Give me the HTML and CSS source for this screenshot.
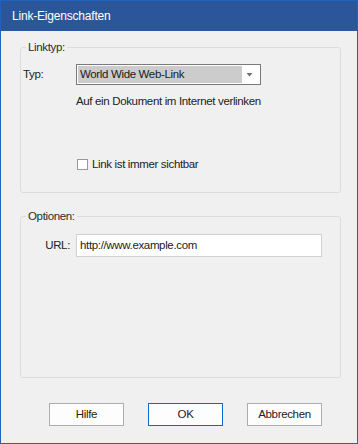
FILE: index.html
```html
<!DOCTYPE html>
<html lang="de">
<head>
<meta charset="utf-8">
<title>Link-Eigenschaften</title>
<link rel="stylesheet" href="styles.css">
</head>
<body>
<div class="window">
  <div class="titlebar">Link-Eigenschaften</div>
  <div class="content">
    <div class="group group-type">
      <span class="legend">Linktyp:</span>
      <div class="row row-type">
        <span class="label">Typ:</span>
        <div class="select">
          <span class="select-value">World Wide Web-Link</span>
          <svg class="select-arrow" width="7" height="4" viewBox="0 0 7 4"><path d="M0.5 0H6.5L3.5 3.5Z" fill="#707070"/></svg>
        </div>
      </div>
      <div class="desc">Auf ein Dokument im Internet verlinken</div>
      <label class="check">
        <span class="box"></span>
        <span>Link ist immer sichtbar</span>
      </label>
    </div>
    <div class="group group-options">
      <span class="legend">Optionen:</span>
      <div class="row row-url">
        <span class="label label-url">URL:</span>
        <div class="input">http://www.example.com</div>
      </div>
    </div>
    <div class="buttons">
      <button class="btn">Hilfe</button>
      <button class="btn btn-default">OK</button>
      <button class="btn">Abbrechen</button>
    </div>
  </div>
</div>
</body>
</html>
```
FILE: styles.css
```css
* { box-sizing: border-box; }
html, body { margin: 0; padding: 0; background: #f0f0f0; }
body {
  font-family: "Liberation Sans", Arial, sans-serif;
  font-size: 11.5px;
  letter-spacing: -0.35px;
  color: #222;
  line-height: 15px;
}
.window {
  width: 358px;
  height: 444px;
  border: 1px solid #1f63c2;
  background: #f0f0f0;
  display: flex;
  flex-direction: column;
}
.titlebar {
  height: 30px;
  flex: none;
  background: #2b579a;
  color: #fff;
  font-size: 12px;
  letter-spacing: -0.2px;
  padding-left: 11px;
  display: flex;
  align-items: center;
  padding-top: 1px;
}
.content {
  flex: 1;
  padding: 16px 16px 0 19px;
  display: flex;
  flex-direction: column;
}
.group {
  position: relative;
  border: 1px solid #dcdcdc;
  border-radius: 3px;
  width: 321px;
}
.legend {
  position: absolute;
  top: -8px;
  left: 5px;
  padding: 0 2px;
  background: #f0f0f0;
  color: #2b2b2b;
}
.group-type {
  height: 146px;
  padding: 16px 0 0 0;
}
.group-options {
  height: 162px;
  margin-top: 23px;
  padding: 17px 0 0 0;
}
.row {
  display: flex;
  align-items: center;
}
.label {
  width: 55px;
  padding-left: 2px;
}
.label-url {
  text-align: right;
  padding-right: 6px;
}
.select {
  width: 185px;
  height: 21px;
  border: 1px solid #7a7a7a;
  background: #fff;
  padding: 1px;
  display: flex;
  align-items: center;
}
.select-value {
  width: 164px;
  height: 17px;
  background: #cccccc;
  padding-left: 2px;
  line-height: 17px;
  color: #1a1a1a;
}
.select-arrow {
  margin-left: 4px;
}
.desc {
  margin: 9px 0 0 55px;
}
.check {
  display: flex;
  align-items: center;
  margin: 48px 0 0 56px;
  gap: 4px;
}
.box {
  width: 11px;
  height: 11px;
  border: 1px solid #9a9a9a;
  background: #fff;
}
.input {
  width: 246px;
  height: 23px;
  border: 1px solid #d2d2d2;
  background: #fff;
  padding-left: 3px;
  line-height: 21px;
}
.buttons {
  display: flex;
  justify-content: flex-end;
  gap: 24px;
  margin-top: 25px;
  padding-right: 19px;
}
.btn {
  width: 75px;
  height: 23px;
  border: 1px solid #adadad;
  background: #fdfdfd;
  font: inherit;
  letter-spacing: inherit;
  color: #222;
  padding: 0;
}
.btn-default {
  border-color: #0a6ad3;
}
```
